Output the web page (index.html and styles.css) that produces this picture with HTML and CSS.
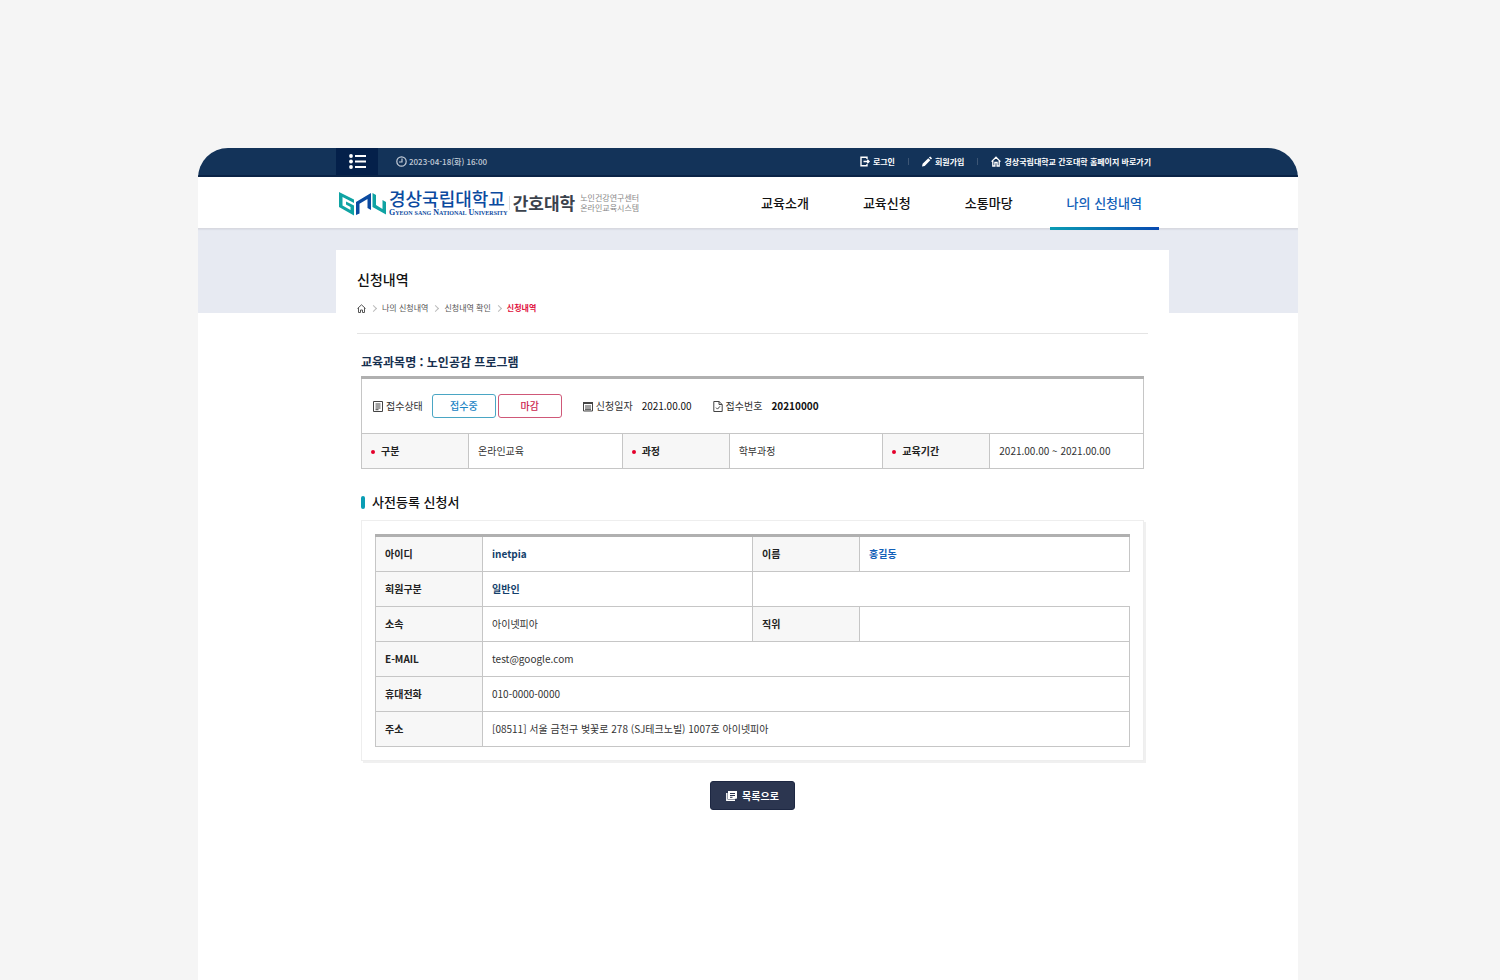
FILE: index.html
```html
<!DOCTYPE html>
<html lang="ko">
<head>
<meta charset="utf-8">
<meta name="viewport" content="width=device-width, initial-scale=1">
<title>신청내역 - 경상국립대학교 간호대학</title>
<link rel="stylesheet" href="styles.css">
</head>
<body>
<div class="site">
  <header>
    <div class="topbar">
      <div class="container topbar-inner">
        <button class="menu-button" type="button" aria-label="전체메뉴">
          <svg width="17" height="15" viewBox="0 0 17 15" fill="#fff"><circle cx="2" cy="2" r="1.9"/><circle cx="2" cy="7.5" r="1.9"/><circle cx="2" cy="13" r="1.9"/><path d="M6 1h11v2H6zM6 6.5h11v2H6zM6 12h11v2H6z"/></svg>
        </button>
        <p class="clock">
          <svg width="11" height="11" viewBox="0 0 11 11" fill="none" stroke="currentColor" stroke-width="1.200"><circle cx="5.500" cy="5.500" r="4.700"/><path d="M6 2.500V6H3"/></svg>
          2023-04-18(화) 16:00
        </p>
        <ul class="util">
          <li><a href="#login"><svg width="10" height="11" viewBox="0 0 10 11" fill="none" stroke="currentColor" stroke-width="1.400"><path d="M7 3V1.200H1v8.600h6V8M3.500 5.500H9M7.300 3.700 9.100 5.500 7.300 7.300"/></svg>로그인</a></li>
          <li><a href="#join"><svg width="10" height="11" viewBox="0 0 10 11" fill="currentColor"><path d="M0 10.500 .6 7.800 6.300 2.200 8.300 4.200 2.700 9.900zM6.900 1.600 8.200.4l1.900 1.900L8.900 3.600z"/></svg>회원가입</a></li>
          <li><a href="#home"><svg width="10" height="11" viewBox="0 0 10 11" fill="none" stroke="currentColor" stroke-width="1.300"><path d="M.6 5.600 5 1.200l4.400 4.400M1.800 5v5h2.100V6.500h2.200V10h2.100V5"/></svg>경상국립대학교 간호대학 홈페이지 바로가기</a></li>
        </ul>
      </div>
    </div>
    <div class="masthead">
      <div class="container masthead-inner">
        <a class="logo" href="#top">
          <svg class="mark" width="49" height="27" viewBox="0 0 49 27"><path fill="#0fa3a3" d="M1 2 16 9.500V13L4.500 7v8.500l8 4.500v-3L8 14.500v-3l8 4v10L1 17z"/><path fill="#0b4aa0" d="M18 25V12L33 3v17l-3.500-2V9l-8 4.700v9.800z"/><path fill="#0fa3a3" d="M34.500 3 38 5v10l6.500 4v-9l3.500 2v12.500L34.500 17z"/></svg>
          <span class="univ"><span class="univ-ko">경상국립대학교</span><span class="univ-en">Gyeon sang National University</span></span>
          <span class="college">간호대학</span>
          <span class="system">노인건강연구센터<br>온라인교육시스템</span>
        </a>
        <nav class="gnb">
          <a href="#intro">교육소개</a>
          <a href="#apply">교육신청</a>
          <a href="#community">소통마당</a>
          <a href="#mine" class="active" aria-current="page">나의 신청내역</a>
        </nav>
      </div>
    </div>
  </header>
  <main class="visual">
    <div class="container panel">
      <div class="page-head">
        <h1>신청내역</h1>
        <nav class="crumbs">
          <a href="#home" aria-label="홈"><svg width="9" height="9" viewBox="0 0 9 9" fill="none" stroke="#555"><path d="M.5 4.500 4.500.8l4 3.700M1.500 4v4.500h2V6h2v2.500h2V4"/></svg></a>
          <a href="#mine">나의 신청내역</a>
          <a href="#check">신청내역 확인</a>
          <a href="#list" class="current" aria-current="page">신청내역</a>
        </nav>
      </div>
      <div class="content">
        <h2 class="course">교육과목명 : 노인공감 프로그램</h2>
        <table class="grid summary">
          <colgroup><col class="label"><col><col class="label"><col><col class="label"><col></colgroup>
          <tbody>
            <tr><td colspan="6">
              <div class="status">
                <div class="item"><svg width="10" height="11" viewBox="0 0 10 11" fill="none" stroke="#444"><path d="M.5.5h9v10h-9zM2.500 3h5M2.500 5h5M2.500 7h5M2.500 8.700h3"/></svg>접수상태</div>
                <div class="chips"><span class="chip open">접수중</span><span class="chip closed">마감</span></div>
                <div class="item date"><svg width="10" height="11" viewBox="0 0 10 11" fill="none" stroke="#444"><path d="M.5 1.500h9v8.500h-9z"/><path stroke-width="2" d="M0 2h10"/><path d="M2 5h6M2 7h6M2 8.700h6" /></svg>신청일자</div>
                <span class="value">2021.00.00</span>
                <div class="item number"><svg width="10" height="11" viewBox="0 0 10 11" fill="none" stroke="#444"><path d="M6 .5H.8v10h8.400V3.500zM6 .5v3h3.200M3 6.600l1.500 1.500L7 5.300"/></svg>접수번호</div>
                <strong class="value">20210000</strong>
              </div>
            </td></tr>
            <tr><th scope="row">구분</th><td>온라인교육</td><th scope="row">과정</th><td>학부과정</td><th scope="row">교육기간</th><td>2021.00.00 ~ 2021.00.00</td></tr>
          </tbody>
        </table>
        <h2 class="section">사전등록 신청서</h2>
        <div class="card">
          <table class="grid form">
            <colgroup><col class="label"><col><col class="label"><col></colgroup>
            <tbody>
              <tr><th scope="row">아이디</th><td class="id">inetpia</td><th scope="row">이름</th><td class="name">홍길동</td></tr>
              <tr><th scope="row">회원구분</th><td class="id">일반인</td></tr>
              <tr><th scope="row">소속</th><td>아이넷피아</td><th scope="row">직위</th><td></td></tr>
              <tr><th scope="row">E-MAIL</th><td colspan="3">test@google.com</td></tr>
              <tr><th scope="row">휴대전화</th><td colspan="3">010-0000-0000</td></tr>
              <tr><th scope="row">주소</th><td colspan="3">[08511] 서울 금천구 벚꽃로 278 (SJ테크노빌) 1007호 아이넷피아</td></tr>
            </tbody>
          </table>
        </div>
        <div class="actions">
          <button class="back" type="button"><svg width="11" height="10" viewBox="0 0 11 10"><path fill="#fff" d="M2 0h9v7.500L8.500 8H2z"/><path fill="none" stroke="#fff" stroke-width="1.400" d="M.8 2v7.200H9"/><path stroke="#2c3650" d="M4 2.500h5M4 4.500h5M4 6.300h2.500"/></svg>목록으로</button>
        </div>
      </div>
    </div>
  </main>
</div>
</body>
</html>
```
FILE: styles.css
```css
* { box-sizing: border-box; }

body {
  margin: 0;
  padding: 148px 202px 0 198px;
  background: #f5f5f5;
  color: #333;
  font: 10px/16px "Noto Sans CJK KR", sans-serif;
}

h1, h2, p, ul { margin: 0; padding: 0; }
ul { list-style: none; }
a { color: inherit; text-decoration: none; }
button { border: 0; padding: 0; font: inherit; cursor: pointer; }
svg { flex: none; display: block; }

.site {
  min-height: calc(100vh - 148px);
  background: #fff;
  border-radius: 30px 30px 0 0;
  overflow: hidden;
}
.container { margin: 0 129px 0 138px; }

.topbar { background: #133359; border-bottom: 2px solid #0a2346; }
.topbar-inner { display: flex; align-items: center; height: 27px; }
.menu-button {
  display: grid;
  place-items: center;
  align-self: stretch;
  width: 42px;
  background: #04204a;
}
.clock {
  display: flex;
  align-items: center;
  gap: 2px;
  margin-left: 18px;
  color: #c3ccd8;
  font-size: 8px;
  font-weight: 500;
}
.util {
  display: flex;
  margin-left: auto;
  padding-right: 18px;
  color: #fff;
  font-size: 8px;
  font-weight: 700;
}
.util li { display: flex; align-items: center; }
.util li + li::before {
  content: "";
  width: 1px;
  height: 7px;
  margin: 0 13px;
  background: #3d5675;
}
.util a { display: flex; align-items: center; gap: 3px; }

.masthead {
  position: relative;
  border-bottom: 1px solid #d8d9e0;
  box-shadow: 0 1px 1px #dcdfe8;
}
.masthead-inner { display: flex; justify-content: space-between; height: 51px; }
.logo { display: flex; align-items: center; margin-left: 2px; white-space: nowrap; }
.mark { margin-top: 2px; }
.univ { display: flex; flex-direction: column; margin-left: 2px; color: #0b4aa0; }
.univ-ko { font-size: 18px; font-weight: 500; line-height: 18px; }
.univ-en {
  margin-top: 2px;
  font: 700 8px/8px "Liberation Serif", serif;
  font-variant: small-caps;
}
.college {
  margin-left: 1px;
  padding-left: 3px;
  border-left: 1px solid #ddd;
  color: #3b424c;
  font-size: 17px;
  font-weight: 700;
  line-height: 14px;
}
.system { margin-left: 5px; color: #888; font-size: 8px; line-height: 10px; }

.gnb { display: flex; color: #111; font-size: 13px; font-weight: 500; line-height: 51px; }
.gnb a { position: relative; padding: 0 27px; white-space: nowrap; }
.gnb .active { color: #1260b8; }
.gnb .active::after {
  content: "";
  position: absolute;
  inset: auto 10px -2px;
  height: 3px;
  background: linear-gradient(90deg, #0a9db4, #0849b0);
}

.visual { padding-top: 21px; background: linear-gradient(#e7eaf2, #e7eaf2) 0 0 / 100% 84px no-repeat; }
.panel { padding: 19px 21px; background: #fff; }
.page-head { padding-bottom: 17px; border-bottom: 1px solid #e4e4e4; }
h1 { color: #111; font-size: 14px; font-weight: 500; line-height: 20px; }
.crumbs { display: flex; align-items: center; margin-top: 11px; color: #555; font-size: 8px; }
.crumbs a { display: flex; align-items: center; }
.crumbs a + a::before {
  content: "";
  width: 4px;
  height: 4px;
  margin: 0 6px 0 5px;
  border: solid #bbb;
  border-width: 1px 1px 0 0;
  transform: rotate(45deg);
}
.crumbs .current { color: #e0103c; font-weight: 700; }

.content { padding: 19px 4px 0; }
.course { color: #17304f; font-size: 12px; font-weight: 700; line-height: 18px; }

.grid {
  width: 100%;
  border-collapse: collapse;
  table-layout: fixed;
}
.grid .label { width: 107px; }
.grid th, .grid td { height: 35px; padding: 0 9px; border: 1px solid #c6c6c6; text-align: left; font-weight: 400; }
.grid th { background: #f7f7f7; color: #222; font-weight: 700; }
.grid tr:first-child > * { border-top: 3px solid #b0b0b0; }
.summary { margin-top: 5px; }
.summary tr:first-child td { height: 56px; }
.summary th::before {
  content: "";
  display: inline-block;
  width: 4px;
  height: 4px;
  margin-right: 6px;
  border-radius: 50%;
  background: #e4002b;
  vertical-align: middle;
}

.status { display: flex; align-items: center; padding-left: 2px; }
.item { display: flex; align-items: center; gap: 3px; }
.chips { display: flex; gap: 2px; margin-left: 9px; }
.chip {
  width: 64px;
  border: 1px solid;
  border-radius: 3px;
  font-weight: 500;
  line-height: 22px;
  text-align: center;
}
.open { border-color: #4aa6c4; color: #1883c4; }
.closed { border-color: #cf5878; color: #cc2850; }
.date, .number { margin-left: 21px; }
.value { margin-left: 9px; color: #111; }
strong.value { font-weight: 700; }

.section {
  display: flex;
  align-items: center;
  gap: 7px;
  margin-top: 23px;
  color: #111;
  font-size: 13px;
  font-weight: 500;
  line-height: 20px;
}
.section::before { content: ""; width: 4px; height: 13px; border-radius: 2px; background: #0a9db4; }
.card {
  margin-top: 8px;
  padding: 13px;
  border: 1px solid #eee;
  box-shadow: 2px 2px 0 #f0f0f0;
}
.form tr:first-child > * { height: 36px; }
.id { color: #143f6b; }
.name { color: #1260b8; }
.form .id, .form .name { font-weight: 700; }

.actions { display: flex; justify-content: center; margin-top: 20px; }
.back {
  display: flex;
  align-items: center;
  gap: 5px;
  height: 29px;
  padding: 0 15px;
  border: 1px solid #1d2742;
  border-radius: 3px;
  background: #2c3650;
  color: #fff;
  font-weight: 700;
}

@media (max-width: 1200px) {
  body { padding: 24px 16px 0; }
  .container { margin: 0 16px; }
  .masthead-inner { flex-direction: column; height: auto; padding-top: 12px; }
}
```
